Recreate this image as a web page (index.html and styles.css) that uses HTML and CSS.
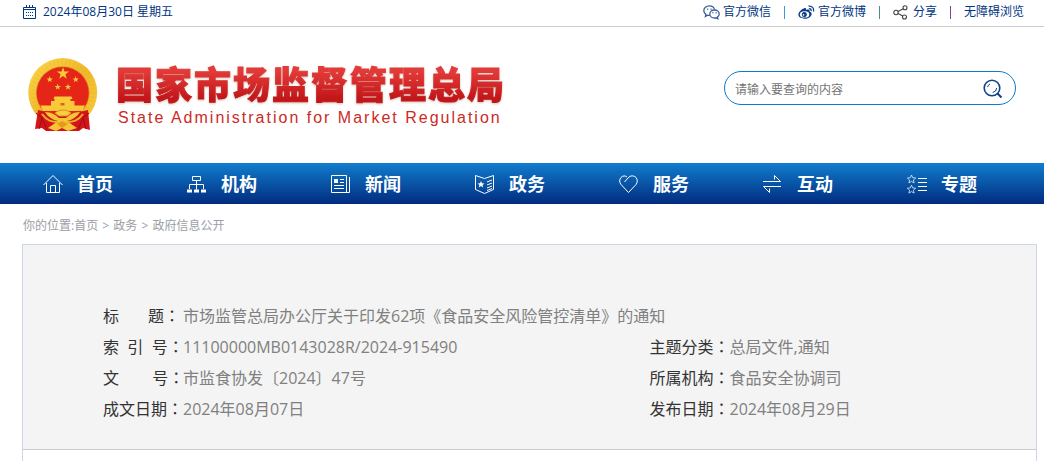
FILE: index.html
```html
<!DOCTYPE html>
<html lang="zh-CN">
<head>
    <meta charset="UTF-8">
    <meta name="viewport" content="width=device-width, initial-scale=1.0">
    <title>国家市场监督管理总局</title>
    <link rel="stylesheet" href="styles.css">
</head>
<body>
    <div class="topbar">
        <div class="date">
            <svg width="13" height="14" viewBox="0 0 13 14" fill="none" stroke="#01357f">
                <path d="M0.5 2.5h12v11h-12zM0 4.500h13"/>
                <path d="M3.500 0v3M6.500 0v3M9.500 0v3"/>
                <path d="M3 7.500h1m1 0h1m1 0h1m1 0h1M3 10.500h1m1 0h1m1 0h1m1 0h1"/>
            </svg>
            <span>2024年08月30日 星期五</span>
        </div>
        <div class="links">
            <a href="#">
                <svg width="17" height="15" viewBox="0 0 17 15" fill="none" stroke="#3b5f95" stroke-width="1.3">
                    <path d="M11.6 4.6C11 2.300 8.900 .8 6.300 .8 3.200 .8 .8 2.900 .8 5.600c0 1.600.8 2.900 2.100 3.800l-.5 2 2.300-1.200c.7.2 1.400.2 2.100.1"/>
                    <path d="M11.500 5c-2.700 0-4.700 1.800-4.700 4s2 4 4.700 4c.5 0 1-.1 1.500-.2l1.800 1-.4-1.700c1.100-.7 1.800-1.800 1.800-3.100 0-2.200-2-4-4.700-4z"/>
                    <path d="M4.200 4.200h1M7.600 4.200h1M9.400 7.800h1M12.600 7.800h1" stroke-width="1.500"/>
                </svg>
                <span>官方微信</span>
            </a>
            <i class="line blue"></i>
            <a href="#">
                <svg width="17" height="15" viewBox="0 0 17 15">
                    <path fill="#0a3f88" d="M6.200 3.200c1.200-.5 2.200.1 1.800 1.800 1.800-.8 4-.6 3.600 1.500 1.300.4 2.200 1.300 2 2.700-.3 2.400-3.300 4.500-7 4.500S.4 11.900.4 9.500c0-2.200 3-5.300 5.800-6.300z"/>
                    <ellipse cx="6.600" cy="9.400" rx="4.700" ry="3.200" fill="#fff"/>
                    <circle cx="6.300" cy="9.500" r="2.500" fill="#0a3f88"/>
                    <circle cx="5.500" cy="9.900" r=".8" fill="#fff"/>
                    <path fill="none" stroke="#0a3f88" stroke-width="1.300" d="M10.500 1.200c3.400-.6 5.900 2.100 5 5.300M10.900 3.700c1.600-.2 2.600.9 2.200 2.400"/>
                </svg>
                <span>官方微博</span>
            </a>
            <i class="line teal"></i>
            <a href="#">
                <svg width="17" height="15" viewBox="0 0 17 15" fill="none" stroke="#444" stroke-width="1.100">
                    <circle cx="3" cy="7.500" r="2.200"/>
                    <circle cx="12" cy="2.800" r="2"/>
                    <circle cx="11.500" cy="12" r="2"/>
                    <path d="M5 6.500l5.200-2.700M5 8.500l4.800 2.600"/>
                </svg>
                <span>分享</span>
            </a>
            <i class="line purple"></i>
            <a href="#">无障碍浏览</a>
        </div>
    </div>

    <header class="header">
        <a class="logo" href="#">
            <svg class="emblem" width="70" height="76" viewBox="0 0 70 76">
                <defs>
                    <linearGradient id="gold" x1="0" y1="0" x2="1" y2="1">
                        <stop offset="0" stop-color="#fbd84c"/>
                        <stop offset="0.5" stop-color="#f0b82c"/>
                        <stop offset="1" stop-color="#f8cd3c"/>
                    </linearGradient>
                    <polygon id="star" points="0,-6.500 1.500,-2 6.200,-2 2.400,.8 3.800,5.300 0,2.500 -3.800,5.300 -2.400,.8 -6.200,-2 -1.500,-2"/>
                </defs>
                <circle cx="34.700" cy="35.500" r="34.500" fill="url(#gold)"/>
                <circle cx="34.700" cy="35.500" r="30" fill="none" stroke="#d99a20" stroke-width="5" stroke-dasharray="1 3" opacity=".2"/>
                <circle cx="34.700" cy="36" r="26.800" fill="#d9901c"/>
                <circle cx="34.700" cy="36" r="26" fill="#e42518"/>
                <g fill="#f9c93a">
                    <use href="#star" transform="translate(35 16.500)"/>
                    <use href="#star" transform="translate(21.700 22.500) scale(.52)"/>
                    <use href="#star" transform="translate(47.700 22.500) scale(.52)"/>
                    <use href="#star" transform="translate(29.700 30) scale(.52)"/>
                    <use href="#star" transform="translate(40 30) scale(.52)"/>
                    <path d="M26.500 39.500h17l1 2.500h-19zM26.500 42h16v2h-16zM23 44h23.500v4.500H23zM12.500 48.500h44.500l-2.500 5.500H15z"/>
                </g>
                <path d="M32.500 46h4v2.500h-4z" fill="#c8700e"/>
                <path d="M10 53l9 2 10 4h11l11-4 9-2 2 20-7-2-4 3H18l-4-3-7 1z" fill="#d3151a"/>
                <path d="M8 56l6 5-3 11M61 56l-6 5 3 11M14 61l5 12M55 61l-5 12" fill="none" stroke="#9d0d12"/>
                <path d="M17 55c6 0 11 3 14 6h7c3-3 8-6 14-6-3 5-8 8-13 9l10 7-9 3-6-3-6 3-8-3 10-7c-5-1-10-4-13-9z" fill="#f6c535"/>
                <path d="M14 57c5 7 10 8 16 8M55 57c-5 7-10 8-16 8" fill="none" stroke="#efae2a" stroke-width="2"/>
                <path d="M29 67l5-3 6 3-6 4z" fill="#e49a1c"/>
                <path d="M27 56c4-4 12-4 16 0l-4 3h-8z" fill="#f7cd42" stroke="#d9901c"/>
            </svg>
            <span class="names">
                <strong>国家市场监督管理总局</strong>
                <em>State Administration for Market Regulation</em>
            </span>
        </a>
        <form class="search">
            <input type="text" aria-label="查询内容" placeholder="请输入要查询的内容">
            <button type="submit" aria-label="搜索">
                <svg width="20" height="20" viewBox="0 0 20 20" fill="none" stroke="#123f86" stroke-width="1.600">
                    <circle cx="9" cy="9" r="7.800"/>
                    <path d="M14.500 14.500l4 4" stroke-width="2"/>
                    <path d="M4.500 8a5 5 0 0 1 2.500-3M13.700 9a5 5 0 0 1-4 4.500" stroke-width="1"/>
                </svg>
            </button>
        </form>
    </header>

    <nav class="nav">
        <a href="#">
            <svg width="20" height="20" viewBox="0 0 20 20">
                <path d="M.5 11L10 1.500l9.500 9.500M3.500 9v9.500h13V9M7.500 18v-6.500h5V18"/>
            </svg>
            <span>首页</span>
        </a>
        <a href="#">
            <svg width="20" height="20" viewBox="0 0 20 20">
                <path d="M5.500 2.500h8v4h-8zM9.500 6.500v9M2.500 15v-4.500h14V15"/>
                <path class="solid" d="M0 15.500h5v3H0zM7 15.500h5v3H7zM14 15.500h5v3h-5z"/>
            </svg>
            <span>机构</span>
        </a>
        <a href="#">
            <svg width="20" height="20" viewBox="0 0 20 20">
                <path d="M.5 1.500h15v17H.5zM18.500 3v15.500H15M9 5.500h4M9 8.500h4M3 11.500h10M3 14.500h10"/>
                <path class="solid" d="M3 5h4v4H3z"/>
            </svg>
            <span>新闻</span>
        </a>
        <a href="#">
            <svg width="20" height="20" viewBox="0 0 20 20">
                <path d="M.5 1.500l9 3 9-3v14l-9 4-9-4zM12 8l5-2M12 11l5-2M12 14l5-2M12 16.500l5-2"/>
                <path class="solid" d="M6 7l1 2.200 2.500.2-1.900 1.600.6 2.400L6 12.100l-2.200 1.300.6-2.400-1.900-1.600 2.500-.2z"/>
            </svg>
            <span>政务</span>
        </a>
        <a href="#">
            <svg width="20" height="20" viewBox="0 0 20 20">
                <path d="M5.500 8L9 4c2.500-3 6-2.500 8-.5 1.800 2.200 1.600 5 0 7l-7.500 8-7.500-8c-1.800-2.200-1.800-5 0-7s4.500-2 6-.5"/>
            </svg>
            <span>服务</span>
        </a>
        <a href="#">
            <svg width="20" height="20" viewBox="0 0 20 20">
                <path d="M0 7.500h17.500l-6-6v4M18 12.500H.5l6 6v-4"/>
            </svg>
            <span>互动</span>
        </a>
        <a href="#">
            <svg width="20" height="20" viewBox="0 0 20 20">
                <path d="M11 4.500h9M11 8.500h9M11 12.500h9M11 16.500h9"/>
                <path class="faint" d="M4.500 1l1.200 2.700 3 .3-2.300 2 .7 2.900-2.600-1.500-2.600 1.500.7-2.900-2.300-2 3-.3zM4.500 11.200l1.200 2.700 3 .3-2.300 2 .7 2.900-2.600-1.500-2.600 1.500.7-2.900-2.300-2 3-.3z"/>
            </svg>
            <span>专题</span>
        </a>
    </nav>

    <div class="crumbs">
        你的位置:<a href="#">首页</a> <b>&gt;</b> <a href="#">政务</a> <b>&gt;</b> <a href="#">政府信息公开</a>
    </div>

    <main class="content">
        <div class="info">
            <table>
                <colgroup>
                    <col class="name">
                    <col class="value">
                    <col class="name">
                    <col>
                </colgroup>
                <tr>
                    <th scope="row">标&nbsp;&nbsp;&nbsp;&nbsp;&nbsp;&nbsp;&nbsp;题<span class="colon" lang="zh-TW">：</span></th>
                    <td colspan="3">市场监管总局办公厅关于印发62项《食品安全风险管控清单》的通知</td>
                </tr>
                <tr>
                    <th scope="row">索&nbsp;&nbsp;引&nbsp;&nbsp;号<span class="colon" lang="zh-TW">：</span></th>
                    <td>11100000MB0143028R/2024-915490</td>
                    <th scope="row">主题分类<span class="colon" lang="zh-TW">：</span></th>
                    <td>总局文件,通知</td>
                </tr>
                <tr>
                    <th scope="row">文&nbsp;&nbsp;&nbsp;&nbsp;&nbsp;&nbsp;&nbsp;&nbsp;号<span class="colon" lang="zh-TW">：</span></th>
                    <td>市监食协发〔2024〕47号</td>
                    <th scope="row">所属机构<span class="colon" lang="zh-TW">：</span></th>
                    <td>食品安全协调司</td>
                </tr>
                <tr>
                    <th scope="row">成文日期<span class="colon" lang="zh-TW">：</span></th>
                    <td>2024年08月07日</td>
                    <th scope="row">发布日期<span class="colon" lang="zh-TW">：</span></th>
                    <td>2024年08月29日</td>
                </tr>
            </table>
        </div>
    </main>
</body>
</html>
```
FILE: styles.css
```css
* {
    box-sizing: border-box;
    margin: 0;
    padding: 0;
}

body {
    display: flex;
    flex-direction: column;
    min-height: 100vh;
    background-color: #fff;
    font-family: "Open Sans", "Noto Sans CJK SC", sans-serif;
    font-size: 12px;
}

a {
    color: inherit;
    text-decoration: none;
}

svg {
    display: block;
    flex: none;
}

/* Top bar */
.topbar {
    display: flex;
    justify-content: space-between;
    align-items: center;
    padding: 0 20px 2px 23px;
    border-bottom: 1px solid #ccc;
    color: #01357f;
    line-height: 24px;
}

.date {
    display: flex;
    align-items: center;
    gap: 7px;
}

.links {
    display: flex;
    align-items: center;
    gap: 13px;
}

.links a {
    display: flex;
    align-items: center;
    gap: 3px;
}

.line {
    width: 1px;
    height: 13px;
}

.blue {
    background-color: #3c9ad6;
}

.teal {
    background-color: #4d8a92;
}

.purple {
    background-color: #8440a0;
}

/* Header */
.header {
    display: flex;
    justify-content: space-between;
    align-items: center;
    height: 136px;
    padding: 0 28px;
}

.logo {
    display: flex;
    align-items: center;
    gap: 18px;
}

.names {
    padding-top: 2px;
}

.names strong {
    display: block;
    background: linear-gradient(#e23a38 20%, #c3161a 80%);
    -webkit-background-clip: text;
    background-clip: text;
    color: transparent;
    -webkit-text-stroke: 1px transparent;
    filter: drop-shadow(0 1px 1px rgba(150, 110, 70, 0.4));
    font-size: 37px;
    font-weight: 900;
    letter-spacing: 2px;
    line-height: 44px;
}

.names em {
    display: block;
    padding-left: 2px;
    color: #cc2a26;
    font-family: "Liberation Sans", sans-serif;
    font-size: 16px;
    font-style: normal;
    letter-spacing: 2px;
    line-height: 22px;
}

.search {
    display: flex;
    align-items: center;
    width: 292px;
    height: 34px;
    margin-bottom: 14px;
    padding: 2px 12px 0 10px;
    border: 1px solid #0f7acb;
    border-radius: 17px;
}

.search input {
    flex: 1;
    min-width: 0;
    border: none;
    outline: none;
    background: none;
    font: inherit;
}

.search input::placeholder {
    color: #757575;
}

.search button {
    border: none;
    background: none;
    cursor: pointer;
}

/* Navigation */
.nav {
    display: grid;
    grid-template-columns: repeat(7, 1fr);
    padding: 0 14px 0 22px;
    background: linear-gradient(#117dce, #012c7f);
    color: #fff;
    font-size: 18px;
    font-weight: bold;
    line-height: 39px;
}

.nav a {
    display: flex;
    align-items: center;
    padding-left: 21px;
}

.nav svg {
    fill: none;
    stroke: #fff;
}

.nav span {
    flex: 1;
    padding: 2px 0 0 14px;
}

.nav .solid {
    fill: #fff;
    stroke: none;
}

.nav .faint {
    stroke-width: 0.7;
}

/* Breadcrumb */
.crumbs {
    padding: 4px 22px 0 23px;
    color: #9a9ea6;
    line-height: 36px;
}

.crumbs b {
    font-weight: normal;
    padding: 0 1px;
}

/* Document info */
.content {
    flex: 1;
    margin: 0 7px 0 22px;
    border: 1px solid #ccd6e6;
    border-bottom: none;
}

.info {
    padding: 56px 0 24px 80px;
    border-bottom: 1px solid #ccc;
    background-color: #f4f4f4;
}

.info table {
    width: 100%;
    border-collapse: collapse;
    table-layout: fixed;
    font-size: 16px;
    line-height: 31px;
}

.info .name {
    width: 80px;
}

.info .value {
    width: 50%;
}

.info th {
    color: #333;
    font-weight: normal;
    text-align: left;
    white-space: nowrap;
}

.info td {
    color: #808080;
}

/* full-width colon drawn in the middle of its square */
.colon {
    font-family: "Noto Sans CJK TC", sans-serif;
    line-height: 1;
}
```
